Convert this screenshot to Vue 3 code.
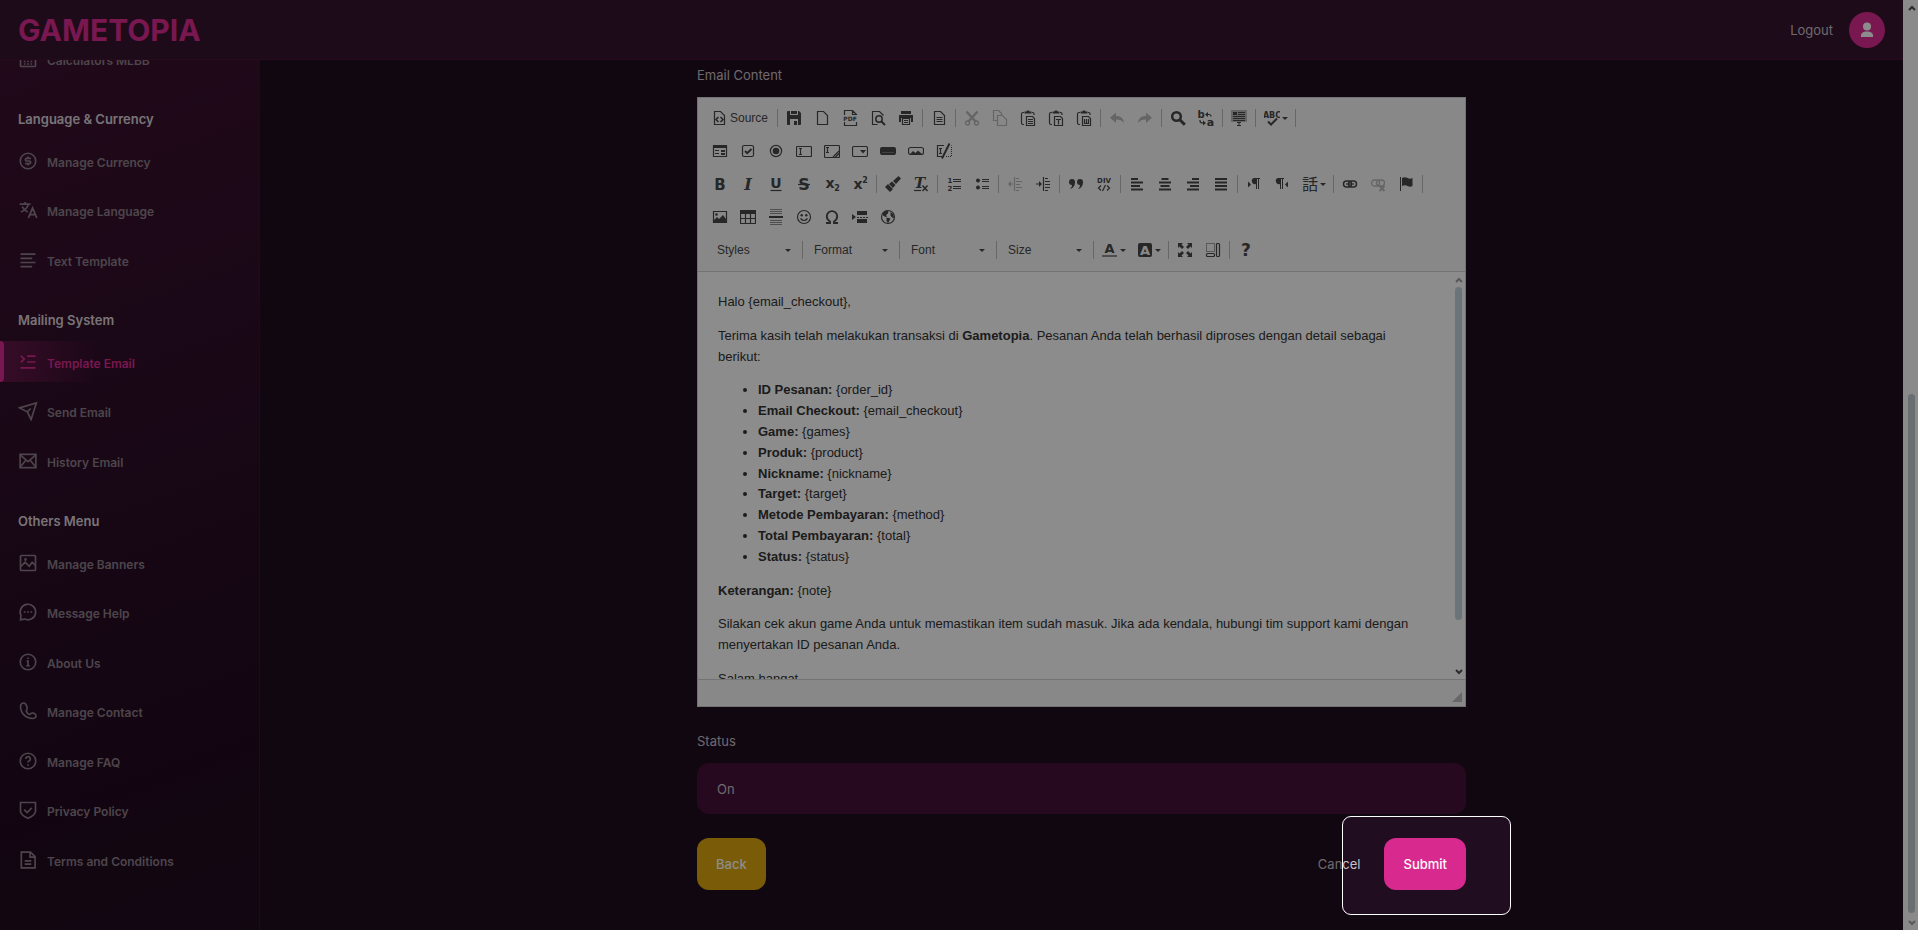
<script setup>
import { ref } from 'vue'

const sections = [
  { title: '', items: [{ label: 'Calculators MLBB', icon: 'calc' }] },
  {
    title: 'Language & Currency',
    items: [
      { label: 'Manage Currency', icon: 'dollar' },
      { label: 'Manage Language', icon: 'translate' },
      { label: 'Text Template', icon: 'lines' },
    ],
  },
  {
    title: 'Mailing System',
    items: [
      { label: 'Template Email', icon: 'indent', active: true },
      { label: 'Send Email', icon: 'send' },
      { label: 'History Email', icon: 'mail' },
    ],
  },
  {
    title: 'Others Menu',
    items: [
      { label: 'Manage Banners', icon: 'image' },
      { label: 'Message Help', icon: 'chat' },
      { label: 'About Us', icon: 'info' },
      { label: 'Manage Contact', icon: 'phone' },
      { label: 'Manage FAQ', icon: 'question' },
      { label: 'Privacy Policy', icon: 'shield' },
      { label: 'Terms and Conditions', icon: 'doc' },
    ],
  },
]

const navIcons = {
  calc: '<rect x="3" y="3" width="18" height="18" rx="1"/><path d="M3 8h18"/><path d="M7 12h2M11 12h2M15 12h2M7 15h2M11 15h2M15 15h2M7 18h2M11 18h2M15 18h2"/>',
  dollar: '<circle cx="12" cy="12" r="9.3"/><path d="M15.5 8.8H10.4a1.6 1.6 0 0 0 0 3.2h3.2a1.6 1.6 0 0 1 0 3.2H8.5M12 6.5v2M12 15.5v2"/>',
  translate: '<path d="M2 5h13M8.5 2.5V5M12.5 5c-1 4-4.500 7.500-9 9.500M5 8c1.500 3 4 5 6.500 6.500M12.500 21.500l5-12 5 12M14.200 17.500h6.600"/>',
  lines: '<path d="M3 5h18M3 10h14M3 15h18M3 20h14"/>',
  indent: '<path d="M11 5h10M11 12h10M3 19h18M3.500 4.500l4 4-4 4"/>',
  send: '<path d="M1.800 8.300l20.200-6-6.300 20-4.500-9.300zM11.200 13l4-4"/>',
  mail: '<rect x="2.500" y="4" width="19" height="16"/><path d="M3 5l9 7.800L21 5M3 19l6.300-8M21 19l-6.300-8"/>',
  image: '<rect x="3" y="3" width="18" height="18" rx="1"/><path d="M3.500 16l5-5 5 5 3.500-5 4 4"/><circle cx="9" cy="7.800" r=".7"/>',
  chat: '<path d="M3 21.300l.6-5A9.300 9.300 0 1 1 8 20.500z"/><path d="M7 12h2M11 12h2M15 12h2"/>',
  info: '<circle cx="12" cy="12" r="9.300"/><path d="M10.300 11H12v5.500M10 16.500h4.200M11 7.500h2"/>',
  phone: '<path d="M7.500 2.500c-2-.5-4.500 1-4.500 4C3 14.500 9.500 21 17.500 21c3 0 4.500-2 4-4-1-2.500-5-3.500-6.500-1.500-.8 1-2 .8-3.500-.8s-2-3-1-4C12 8.500 10 3.200 7.500 2.500z"/>',
  question: '<circle cx="12" cy="12" r="9.300"/><path d="M9.300 9.500a2.700 2.700 0 1 1 3.800 2.500c-.8.400-1.100.8-1.100 1.800M12 15.800v2"/>',
  shield: '<path d="M3 3h18v10.500c0 4-4.500 6.500-9 8.500-4.500-2-9-4.500-9-8.500z"/><path d="M7.500 11.500l3.500 3.500 5.500-5.500"/>',
  doc: '<path d="M4 2.500h11l5.500 5.500v13.500H4zM14.500 3v5.500H20M8 13h8M8 17h8"/>',
}

const page = '<path d="M3.500 1.500h6l4 4v9h-10z" fill="none" stroke="currentColor" stroke-width="1.200"/>'
const clip = '<path d="M4 2.500H3Q1.500 2.500 1.500 4v9q0 1.500 1.500 1.500h1M12 2.500h.5Q14 2.500 14 4v1" fill="none" stroke="currentColor" stroke-width="1.200"/><path d="M4.500 1.500h2L7 .5h2l.5 1h2v2h-7z"/><path d="M6.500 6.500h6l2 2v7h-8z" fill="none" stroke="currentColor" stroke-width="1.200"/>'
const line = (d) => `<path d="${d}" fill="none" stroke="currentColor" stroke-width="1.200"/>`
const thick = (d) => `<path d="${d}" fill="none" stroke="currentColor" stroke-width="2"/>`
const glyph = (t, x, y, size, extra = '') =>
  `<text x="${x}" y="${y}" font-size="${size}" font-family="DejaVu Sans, sans-serif" font-weight="700" text-anchor="middle" ${extra}>${t}</text>`

const icons = {
  source: '<path d="M2.500 1.500h6l4 4v9h-10z" fill="none" stroke="currentColor" stroke-width="1.200"/><path d="M6.500 7L4 9.500 6.500 12M8.500 7L11 9.500 8.500 12" fill="none" stroke="currentColor" stroke-width="1.600"/>',
  save: '<path d="M1 2q0-1 1-1h11l2 2v11q0 1-1 1H2q-1 0-1-1z"/><path d="M4 1h8v4H4zM4 9h8v6H4z" fill="#f8f8f8"/><path d="M5 1h6v3H5zM8 11h3v4H8z"/>',
  newpage: page,
  pdf: line('M2.500 5V.5h8l4 4V5M10.500.5v4h4M2.500 12v3.500h12V12') + glyph('PDF', 8, 11, 6),
  preview: line('M13.500 5.500l-4-4h-7v13h5') + '<circle cx="9" cy="9" r="3.200" fill="none" stroke="currentColor" stroke-width="1.500"/>' + thick('M11 11l4 4'),
  print: '<path d="M3 1h10v3H3zM1 5h14v7h-2V8H3v4H1z"/>' + line('M4.500 8.500h7v6h-7zM6 10.500h4M6 12.500h4'),
  templates: page + line('M5.500 7.500h6M5.500 9.500h6M5.500 11.500h6'),
  cut: '<path d="M2.500 1.500L12 12M13.500 1.500L4 12" fill="none" stroke="currentColor" stroke-width="2.500"/><circle cx="3.500" cy="13" r="2" fill="none" stroke="currentColor" stroke-width="1.300"/><circle cx="12.500" cy="13" r="2" fill="none" stroke="currentColor" stroke-width="1.300"/>',
  copy: line('M5 10.500H1.500v-10h5l3 3V5M5.500 5.500h5l4 4v6h-9z'),
  paste: clip + line('M8 9.500h5M8 11.500h5M8 13.500h5'),
  pastetext: clip + line('M8 9.500h5M10.500 9.500v5'),
  pasteword: clip + line('M8.500 9v4.500h4V9M10.500 9v4'),
  undo: '<path d="M7 2.500v3.500c5 0 7.500 2.500 8 7-2-2.500-4-3.500-8-3.500V13L1 7.800z"/>',
  redo: '<path d="M9 2.500v3.500c-5 0-7.500 2.500-8 7 2-2.500 4-3.500 8-3.500V13l6-5.200z"/>',
  find: '<circle cx="6.500" cy="6.500" r="4.300" fill="none" stroke="currentColor" stroke-width="2.500"/><path d="M9.800 9.800l5 5" stroke="currentColor" stroke-width="3"/>',
  replace: glyph('b', 3, 8, 10) + glyph('a', 12.5, 16, 11) + line('M8 4.500h3q2 0 2 2M2 10v1q0 2 3 2h2') + '<path d="M10 2v5L7 4.500zM5 10.500v5L8 13z"/>',
  selectall: '<path d="M0 0h16v12H0z" opacity=".35"/><path d="M2 2h4v3H2zM7 2h7v1H7zM7 4h7v1H7zM2 6h12v1H2zM2 8h12v1H2zM2 10h12v1H2zM6 12h4v1H6zM6 15h4v1H6zM7.500 12h1v4h-1z"/>',
  spell: glyph('ABC', 8, 8, 8) + thick('M4 11.500l3 3 6-6'),
  form: '<path d="M1.500 2.500h13v11h-13z" fill="none" stroke="currentColor" stroke-width="1.200"/><path d="M1 2h14v3H1zM3 7h4v1H3zM3 10h4v1H3zM9 7h4v2H9zM9 10h4v2H9z"/>',
  checkbox: '<rect x="2.500" y="2.500" width="11" height="11" rx="1.500" fill="none" stroke="currentColor" stroke-width="1.200"/>' + thick('M5 8l2.200 2.200L11.500 6'),
  radio: '<circle cx="8" cy="8" r="5.600" fill="none" stroke="currentColor" stroke-width="1.200"/><circle cx="8" cy="8" r="3.300"/>',
  textfield: '<rect x=".5" y="3.500" width="15" height="10" rx="1" fill="none" stroke="currentColor" stroke-width="1.200"/>' + line('M3 5.500h3M4.500 5.500v6M3 11.500h3'),
  textarea: '<rect x=".5" y="2.500" width="15" height="12" rx="1" fill="none" stroke="currentColor" stroke-width="1.200"/>' + line('M2 4.500h3M3.500 4.500v5M2 9.500h3M9 14l6-6M11.500 14l3.500-3.500'),
  selectfield: '<rect x=".5" y="3.500" width="15" height="10" rx="1.500" fill="none" stroke="currentColor" stroke-width="1.200"/><path d="M8 7h6l-3 3.500z"/>',
  button: '<rect x="0" y="4" width="16" height="8" rx="2"/><path d="M2 9.500h12" stroke="#777"/>',
  imagebutton: '<rect x=".5" y="4.500" width="15" height="7" rx="2" fill="none" stroke="currentColor" stroke-width="1.200"/><path d="M2 11l3-3 2.500 2L10 7.500l4 3.500z"/>',
  hidden: line('M8 2.500H1.500v11H6M3 5.500h3M4.500 5.500v5M3 10.500h3') + '<path d="M10 13.500h5.500v-11" fill="none" stroke="currentColor" stroke-dasharray="1 1"/>' + thick('M13.500.500L6 15.500'),
  bold: glyph('B', 8, 14, 15),
  italic: '<text x="8" y="14" font-size="16" font-family="DejaVu Serif, serif" font-style="italic" font-weight="700" text-anchor="middle">I</text>',
  underline: glyph('U', 8, 12, 14) + line('M2.500 14.500h11'),
  strike: glyph('S', 8, 14, 16) + line('M2 8.500h12'),
  sub: glyph('x', 6, 12, 14) + glyph('2', 13, 15, 8),
  sup: glyph('x', 6, 13, 14) + glyph('2', 13, 7, 8),
  brush: '<path d="M13.500 0L16 2.500 11 8 8 5zM7 5.500L10.500 9 8 12 4 8zM3 8l5 5-3 3-5-5z"/>',
  clear: '<text x="6.500" y="12" font-size="15" font-family="DejaVu Serif, serif" font-style="italic" font-weight="700" text-anchor="middle">T</text>' + line('M1 14.500h7') + '<path d="M9.500 9.500l5 5.500M14.500 9.500l-5 5.500" stroke="currentColor" stroke-width="1.500"/>',
  numlist: glyph('1', 4, 7, 7) + glyph('2', 4, 15, 7) + line('M7 3.500h8M7 5.500h8M7 10.500h8M7 12.500h8'),
  bullist: '<circle cx="4" cy="4.500" r="2"/><circle cx="4" cy="11.500" r="2"/>' + line('M8 3.500h7M8 5.500h7M8 10.500h7M8 12.500h7'),
  outdent: '<path d="M4 5v6L1 8z"/>' + line('M3 8h3M7.500 1v14M9 2.500h3M9 5.500h6M9 8.500h4M9 11.500h6M9 14.500h3'),
  indent: '<path d="M4 5v6l3-3z"/>' + line('M1 8h3M8.500 1v14M10 2.500h3M10 5.500h5M10 8.500h5M10 11.500h5M10 14.500h3'),
  quote: '<path d="M4 3a3 3 0 0 1 3 3c0 4-2 6.500-5 7 1.500-1.500 2-2.500 2-4a3 3 0 0 1 0-6zM12 3a3 3 0 0 1 3 3c0 4-2 6.500-5 7 1.500-1.500 2-2.500 2-4a3 3 0 0 1 0-6z"/>',
  div: glyph('DIV', 8, 7, 7) + line('M5 9.500L2.500 12 5 14.500M11 9.500l2.500 2.500-2.500 2.500M9.500 9l-3 6'),
  left: thick('M2 3h7M2 6.500h12M2 10h9M2 13.500h12'),
  center: thick('M4.500 3h7M2 6.500h12M3.500 10h9M2 13.500h12'),
  right: thick('M7 3h7M2 6.500h12M5 10h9M2 13.500h12'),
  justify: thick('M2 3h12M2 6.500h12M2 10h12M2 13.500h12'),
  ltr: '<path d="M2 5.500v6l3-3z"/><path d="M8 2h6v1h-1v10h-1V3h-1v10h-1V8a3 3 0 0 1-2-6z"/>',
  rtl: '<path d="M14 5.500v6l-3-3z"/><path d="M4 2h6v1H9v10H8V3H7v10H6V8a3 3 0 0 1-2-6z"/>',
  lang: '<text x="8" y="14" font-size="16" font-family="Noto Sans CJK JP, sans-serif" text-anchor="middle">話</text>',
  link: '<rect x="1.500" y="5" width="8" height="6" rx="3" fill="none" stroke="currentColor" stroke-width="1.500"/><rect x="6.500" y="5" width="8" height="6" rx="3" fill="none" stroke="currentColor" stroke-width="1.500"/>' + line('M4 8h8'),
  unlink: '<rect x="1.500" y="4" width="8" height="6" rx="3" fill="none" stroke="currentColor" stroke-width="1.300"/><rect x="6.500" y="4" width="8" height="6" rx="3" fill="none" stroke="currentColor" stroke-width="1.300"/><path d="M9.500 10l5 5M14.500 10l-5 5" stroke="currentColor" stroke-width="1.800"/>',
  flag: '<path d="M2 1h1v14H2zM4 2q3-1.500 5.500 0t5 0v8q-2.500 1.500-5 0T4 10z"/>',
  image: '<path d="M1.500 2.500h13v11h-13z" fill="none" stroke="currentColor" stroke-width="1.200"/><path d="M2 13v-2l3-3 2 2 4-4 3 4v3z"/><circle cx="4.500" cy="5.500" r="1.300"/>',
  table: '<path d="M0 1h16v4H0z"/>' + line('M.5 1.500h15v13H.5zM.5 9.500h15M5.500 5v10M10.500 5v10'),
  hr: '<path d="M1 7h14v2H1z"/><path d="M2 .500h12M2 2.500h12M2 4.500h12M2 11.500h12M2 13.500h12M2 15.500h12" stroke="currentColor" opacity=".6"/>',
  smiley: '<circle cx="8" cy="8" r="6.500" fill="none" stroke="currentColor" stroke-width="1.200"/><circle cx="5.700" cy="6.300" r="1.200"/><circle cx="10.300" cy="6.300" r="1.200"/>' + line('M4.500 9.500q3.500 4 7 0'),
  omega: '<path d="M2 14h4v-1.500C3.500 11 2.800 9 2.800 7.300A5.200 5.200 0 0 1 13.200 7.300c0 1.700-.7 3.700-3.200 5.200V14h4" fill="none" stroke="currentColor" stroke-width="1.800"/>',
  pagebreak: '<path d="M0 5v6l4-3zM5 2h10v4H5zM5 10h10v4H5z"/><path d="M5 8.500h11" stroke="currentColor" stroke-dasharray="2 1"/>',
  globe: '<circle cx="8" cy="8" r="6.500" fill="none" stroke="currentColor" stroke-width="1.200"/><path d="M3 4l3-2.500 2.500 1L8 4.500 6 6l1 1.500-1.500.5L3 6.500zM6.500 8.500l4 1-1 2-1.500 3-1.500-3zM10.500 3l3 2.500L14 9l-2-.5-1.500-2z"/>',
  color: glyph('A', 7.5, 11, 13) + '<path d="M0 13h15v2H0z" opacity=".6"/>',
  bgcolor: '<rect x="1" y="1" width="14" height="14" rx="2"/>' + glyph('A', 8, 13, 13, 'fill="#f8f8f8"'),
  maximize: '<path d="M1 1h5L4.500 2.500 7 5 5 7 2.500 4.500 1 6zM15 1v5l-1.500-1.500L11 7 9 5l2.500-2.500L10 1zM1 15v-5l1.500 1.500L5 9l2 2-2.500 2.500L6 15zM15 15h-5l1.500-1.500L9 11l2-2 2.500 2.500L15 10z"/>',
  blocks: '<path d="M1.500 1.500h8v8h-8z" fill="none" stroke="currentColor" stroke-dasharray="1 1"/><rect x="11.500" y="1.500" width="3" height="13" rx="1" fill="none" stroke="currentColor" stroke-width="1.200"/><rect x="1.500" y="11.500" width="8" height="3" rx="1" fill="none" stroke="currentColor" stroke-width="1.200"/>',
  about: glyph('?', 8, 14, 17),
}

const rows = [
  ['source', '|', 'save', 'newpage', 'pdf', 'preview', 'print', '|', 'templates', '|', '-cut', '-copy', 'paste', 'pastetext', 'pasteword', '|', '-undo', '-redo', '|', 'find', 'replace', '|', 'selectall', '|', 'spell+', '|'],
  ['form', 'checkbox', 'radio', 'textfield', 'textarea', 'selectfield', 'button', 'imagebutton', 'hidden'],
  ['bold', 'italic', 'underline', 'strike', 'sub', 'sup', '|', 'brush', 'clear', '|', 'numlist', 'bullist', '|', '-outdent', 'indent', '|', 'quote', 'div', '|', 'left', 'center', 'right', 'justify', '|', 'ltr', 'rtl', 'lang+', '|', 'link', '-unlink', 'flag', '|'],
  ['image', 'table', 'hr', 'smiley', 'omega', 'pagebreak', 'globe'],
  ['=Styles', '|', '=Format', '|', '=Font', '|', '=Size', '|', 'color+', 'bgcolor+', '|', 'maximize', 'blocks', '|', 'about'],
].map((row) =>
  row.map((t) => {
    if (t === '|') return { type: 'sep' }
    if (t[0] === '=') return { type: 'combo', name: t.slice(1) }
    return { type: 'btn', name: t.replace(/[-+]/g, ''), off: t[0] === '-', caret: t.endsWith('+') }
  })
)

const fields = [
  ['ID Pesanan:', '{order_id}'],
  ['Email Checkout:', '{email_checkout}'],
  ['Game:', '{games}'],
  ['Produk:', '{product}'],
  ['Nickname:', '{nickname}'],
  ['Target:', '{target}'],
  ['Metode Pembayaran:', '{method}'],
  ['Total Pembayaran:', '{total}'],
  ['Status:', '{status}'],
]
const greeting = 'Halo {email_checkout},'
const note = '{note}'
const status = ref('On')
</script>

<template>
  <div class="shell">
    <div class="app">
      <header class="topbar">
        <a href="#" class="logo">GAMETOPIA</a>
        <div class="account">
          <a href="#" class="logout">Logout</a>
          <button type="button" class="avatar" aria-label="Profile">
            <svg viewBox="0 0 16 16" width="16" height="16" fill="currentColor"><circle cx="8" cy="4.500" r="4" /><path d="M2 15c-.5-4 2-5.500 6-5.500s6.500 1.500 6 5.500z" /></svg>
          </button>
        </div>
      </header>

      <div class="body">
        <nav class="sidebar">
          <section v-for="s in sections" :key="s.title" class="group">
            <h2 v-if="s.title">{{ s.title }}</h2>
            <ul>
              <li v-for="i in s.items" :key="i.label">
                <a href="#" class="nav-link" :class="{ active: i.active }">
                  <svg viewBox="0 0 24 24" width="20" height="20" fill="none" stroke="currentColor" stroke-width="2" v-html="navIcons[i.icon]"></svg>
                  <span>{{ i.label }}</span>
                </a>
              </li>
            </ul>
          </section>
        </nav>

        <main class="main">
          <form class="form" @submit.prevent>
            <div class="field">
              <label id="content-label">Email Content</label>
              <div class="editor" role="group" aria-labelledby="content-label">
                <div class="toolbox">
                  <div v-for="(row, r) in rows" :key="r" class="row" :class="{ combos: row[0].type === 'combo' }">
                    <template v-for="(t, n) in row" :key="n">
                      <span v-if="t.type === 'sep'" class="sep"></span>
                      <span v-else-if="t.type === 'combo'" class="combo">
                        <select :aria-label="t.name"><option>{{ t.name }}</option></select>
                        <i class="caret"></i>
                      </span>
                      <button v-else type="button" class="tool" :class="{ caretful: t.caret, labelled: t.name === 'source' }" :disabled="t.off" :aria-label="t.name">
                        <svg viewBox="0 0 16 16" width="16" height="16" fill="currentColor" v-html="icons[t.name]"></svg>
                        <span v-if="t.name === 'source'">Source</span>
                        <i v-if="t.caret" class="caret"></i>
                      </button>
                    </template>
                  </div>
                </div>
                <div class="content">
                  <div class="doc">
                    <p>{{ greeting }}</p>
                    <p>Terima kasih telah melakukan transaksi di <strong>Gametopia</strong>. Pesanan Anda telah berhasil diproses dengan detail sebagai berikut:</p>
                    <ul>
                      <li v-for="f in fields" :key="f[0]"><strong>{{ f[0] }}</strong> {{ f[1] }}</li>
                    </ul>
                    <p><strong>Keterangan:</strong> {{ note }}</p>
                    <p>Silakan cek akun game Anda untuk memastikan item sudah masuk. Jika ada kendala, hubungi tim support kami dengan menyertakan ID pesanan Anda.</p>
                    <p>Salam hangat,</p>
                  </div>
                  <div class="scroll">
                    <svg viewBox="0 0 8 6" width="8" height="6" class="dim"><path d="M1 5l3-3 3 3" /></svg>
                    <div class="track"><div class="thumb"></div></div>
                    <svg viewBox="0 0 8 6" width="8" height="6"><path d="M1 1l3 3 3-3" /></svg>
                  </div>
                </div>
                <div class="foot"><span class="resizer"></span></div>
              </div>
            </div>

            <div class="field">
              <label for="status">Status</label>
              <select id="status" v-model="status" class="status">
                <option>On</option>
                <option>Off</option>
              </select>
            </div>

            <div class="actions">
              <button type="button" class="btn back">Back</button>
              <div class="right">
                <button type="reset" class="cancel">Cancel</button>
                <span class="target">
                  <button type="submit" class="btn submit">Submit</button>
                  <span class="spotlight"></span>
                </span>
              </div>
            </div>
          </form>
        </main>
      </div>
    </div>

    <div class="scroll page-scroll">
      <svg viewBox="0 0 8 6" width="8" height="6"><path d="M1 5l3-3 3 3" /></svg>
      <div class="track"><div class="thumb"></div></div>
      <svg viewBox="0 0 8 6" width="8" height="6" class="dim"><path d="M1 1l3 3 3-3" /></svg>
    </div>
  </div>
</template>

<style>
body {
  background: #200d20;
}
</style>

<style scoped>
* {
  box-sizing: border-box;
}
.shell {
  display: flex;
  height: 100vh;
  overflow: hidden;
  font: 400 13px/20px Inter, "Liberation Sans", sans-serif;
  color: #c8c0c6;
}
button,
select {
  font: inherit;
  color: inherit;
  border: 0;
  background: none;
  padding: 0;
  appearance: none;
}
a {
  color: inherit;
  text-decoration: none;
}
ul {
  margin: 0;
  padding: 0;
  list-style: none;
}
.app {
  flex: 1;
  min-width: 0;
  display: flex;
  flex-direction: column;
  background: #200d20;
}
.topbar {
  position: relative;
  z-index: 1;
  flex: none;
  height: 60px;
  padding: 0 18px;
  display: flex;
  align-items: center;
  justify-content: space-between;
  background: #35142e;
  border-bottom: 1px solid #461436;
}
.logo {
  font-size: 30px;
  line-height: 40px;
  font-weight: 700;
  color: #dc2a92;
}
.account {
  display: flex;
  align-items: center;
  gap: 16px;
}
.avatar {
  width: 36px;
  height: 36px;
  border-radius: 50%;
  background: #dc2a92;
  color: #fff;
  display: grid;
  place-items: center;
}
.body {
  flex: 1;
  min-height: 0;
  display: flex;
}
.sidebar {
  flex: none;
  width: 260px;
  overflow: hidden;
  display: flex;
  flex-direction: column;
  justify-content: flex-end;
  gap: 22px;
  padding-bottom: 42px;
  border-right: 1px solid #38152f;
  background: linear-gradient(160deg, #3c1230 0%, #2f0e29 40%, #220a20 80%, #200d20 100%);
}
.group {
  flex: none;
}
.group h2 {
  margin: 0 0 11px;
  padding-left: 18px;
  font-size: 13px;
  line-height: 20px;
  font-weight: 600;
  color: #dcd4da;
}
.group li {
  margin-bottom: 8px;
}
.group li:nth-child(even) {
  margin-bottom: 9px;
}
.nav-link {
  height: 41px;
  padding-left: 18px;
  display: flex;
  align-items: center;
  gap: 9px;
  font-size: 12px;
  font-weight: 600;
  color: #8c7f89;
}
.nav-link span {
  padding-top: 4px;
}
.nav-link.active {
  position: relative;
  color: #dc2a92;
  background: linear-gradient(90deg, rgba(220, 42, 146, 0.3), rgba(220, 42, 146, 0) 96px);
}
.nav-link.active::before {
  content: "";
  position: absolute;
  inset: 0 auto 0 0;
  width: 4px;
  border-radius: 0 4px 4px 0;
  background: #dc2a92;
}
.main {
  flex: 1;
  min-width: 0;
  display: flex;
  flex-direction: column;
  justify-content: flex-end;
  padding: 0 24px 40px;
}
.form {
  flex: none;
  width: 100%;
  max-width: 769px;
  margin: 0 auto;
  display: flex;
  flex-direction: column;
  gap: 24px;
}
.field {
  display: flex;
  flex-direction: column;
  gap: 12px;
}
.editor {
  border: 1px solid #d1d1d1;
  background: #fff;
  color: #333;
  font-family: "Liberation Sans", Arial, sans-serif;
}
.toolbox {
  padding: 6px 8px 2px;
  background: #f8f8f8;
  border-bottom: 1px solid #d1d1d1;
  color: #484848;
  font-size: 12px;
}
.row {
  display: flex;
  align-items: center;
  height: 28px;
  margin-bottom: 5px;
}
.row.combos {
  padding-left: 2px;
}
.sep {
  flex: none;
  width: 1px;
  height: 18px;
  margin: 0 2px;
  background: #bcbcbc;
}
.tool {
  flex: none;
  width: 28px;
  height: 28px;
  padding: 0 6px;
  display: flex;
  align-items: center;
  gap: 2px;
}
.tool svg {
  flex: none;
}
.tool.caretful {
  width: 35px;
}
.tool.labelled {
  width: 69px;
}
.tool:disabled {
  color: #b8b8b8;
}
.caret {
  flex: none;
  border: 3px solid transparent;
  border-top-color: currentColor;
  border-bottom: 0;
}
.combo {
  width: 92px;
  padding: 0 9px;
  display: flex;
  align-items: center;
}
.combo select {
  flex: 1;
  min-width: 0;
}
.content {
  display: flex;
  height: 407px;
  overflow: hidden;
}
.doc {
  flex: 1;
  padding: 20px;
  line-height: 1.6;
}
.doc p {
  margin: 0 0 13px;
}
.doc ul {
  list-style: disc;
  padding-left: 40px;
  margin: 0 0 13px;
}
.scroll {
  flex: none;
  width: 15px;
  padding: 5px 2px 4px 4px;
  display: flex;
  flex-direction: column;
  align-items: center;
  gap: 4px;
}
.scroll svg {
  flex: none;
  fill: none;
  stroke: #505050;
  stroke-width: 2;
}
.scroll .dim {
  stroke: #a0a0a0;
}
.track {
  flex: 1;
  width: 7px;
}
.thumb {
  height: 88%;
  border-radius: 4px;
  background: #c3d3da;
}
.foot {
  height: 27px;
  padding: 0 3px 4px;
  display: flex;
  justify-content: flex-end;
  align-items: flex-end;
  background: #f8f8f8;
  border-top: 1px solid #d1d1d1;
}
.resizer {
  width: 10px;
  height: 10px;
  background: #bcbcbc;
  clip-path: polygon(100% 0, 100% 100%, 0 100%);
}
.status {
  width: 100%;
  height: 51px;
  padding: 0 20px;
  border-radius: 12px;
  background: #45113a;
}
.actions,
.right {
  display: flex;
  align-items: center;
  justify-content: space-between;
  gap: 24px;
}
.btn {
  height: 52px;
  padding: 0 19px;
  border-radius: 12px;
  color: #fff;
  font-weight: 500;
}
.back {
  background: #dca70f;
}
.submit {
  background: #d8298f;
}
.target {
  position: relative;
}
.spotlight {
  position: absolute;
  z-index: 10;
  top: -22px;
  left: -42px;
  right: -45px;
  bottom: -25px;
  border: 1px solid #fff;
  border-radius: 9px;
  box-shadow: 0 0 0 3000px rgba(0, 0, 0, 0.45);
  pointer-events: none;
}
.page-scroll {
  gap: 7px;
  background: #fcfcfc;
}
.page-scroll .track {
  display: flex;
  flex-direction: column;
  justify-content: flex-end;
}
.page-scroll .thumb {
  height: 58%;
  background: #c0c8cc;
}
</style>
